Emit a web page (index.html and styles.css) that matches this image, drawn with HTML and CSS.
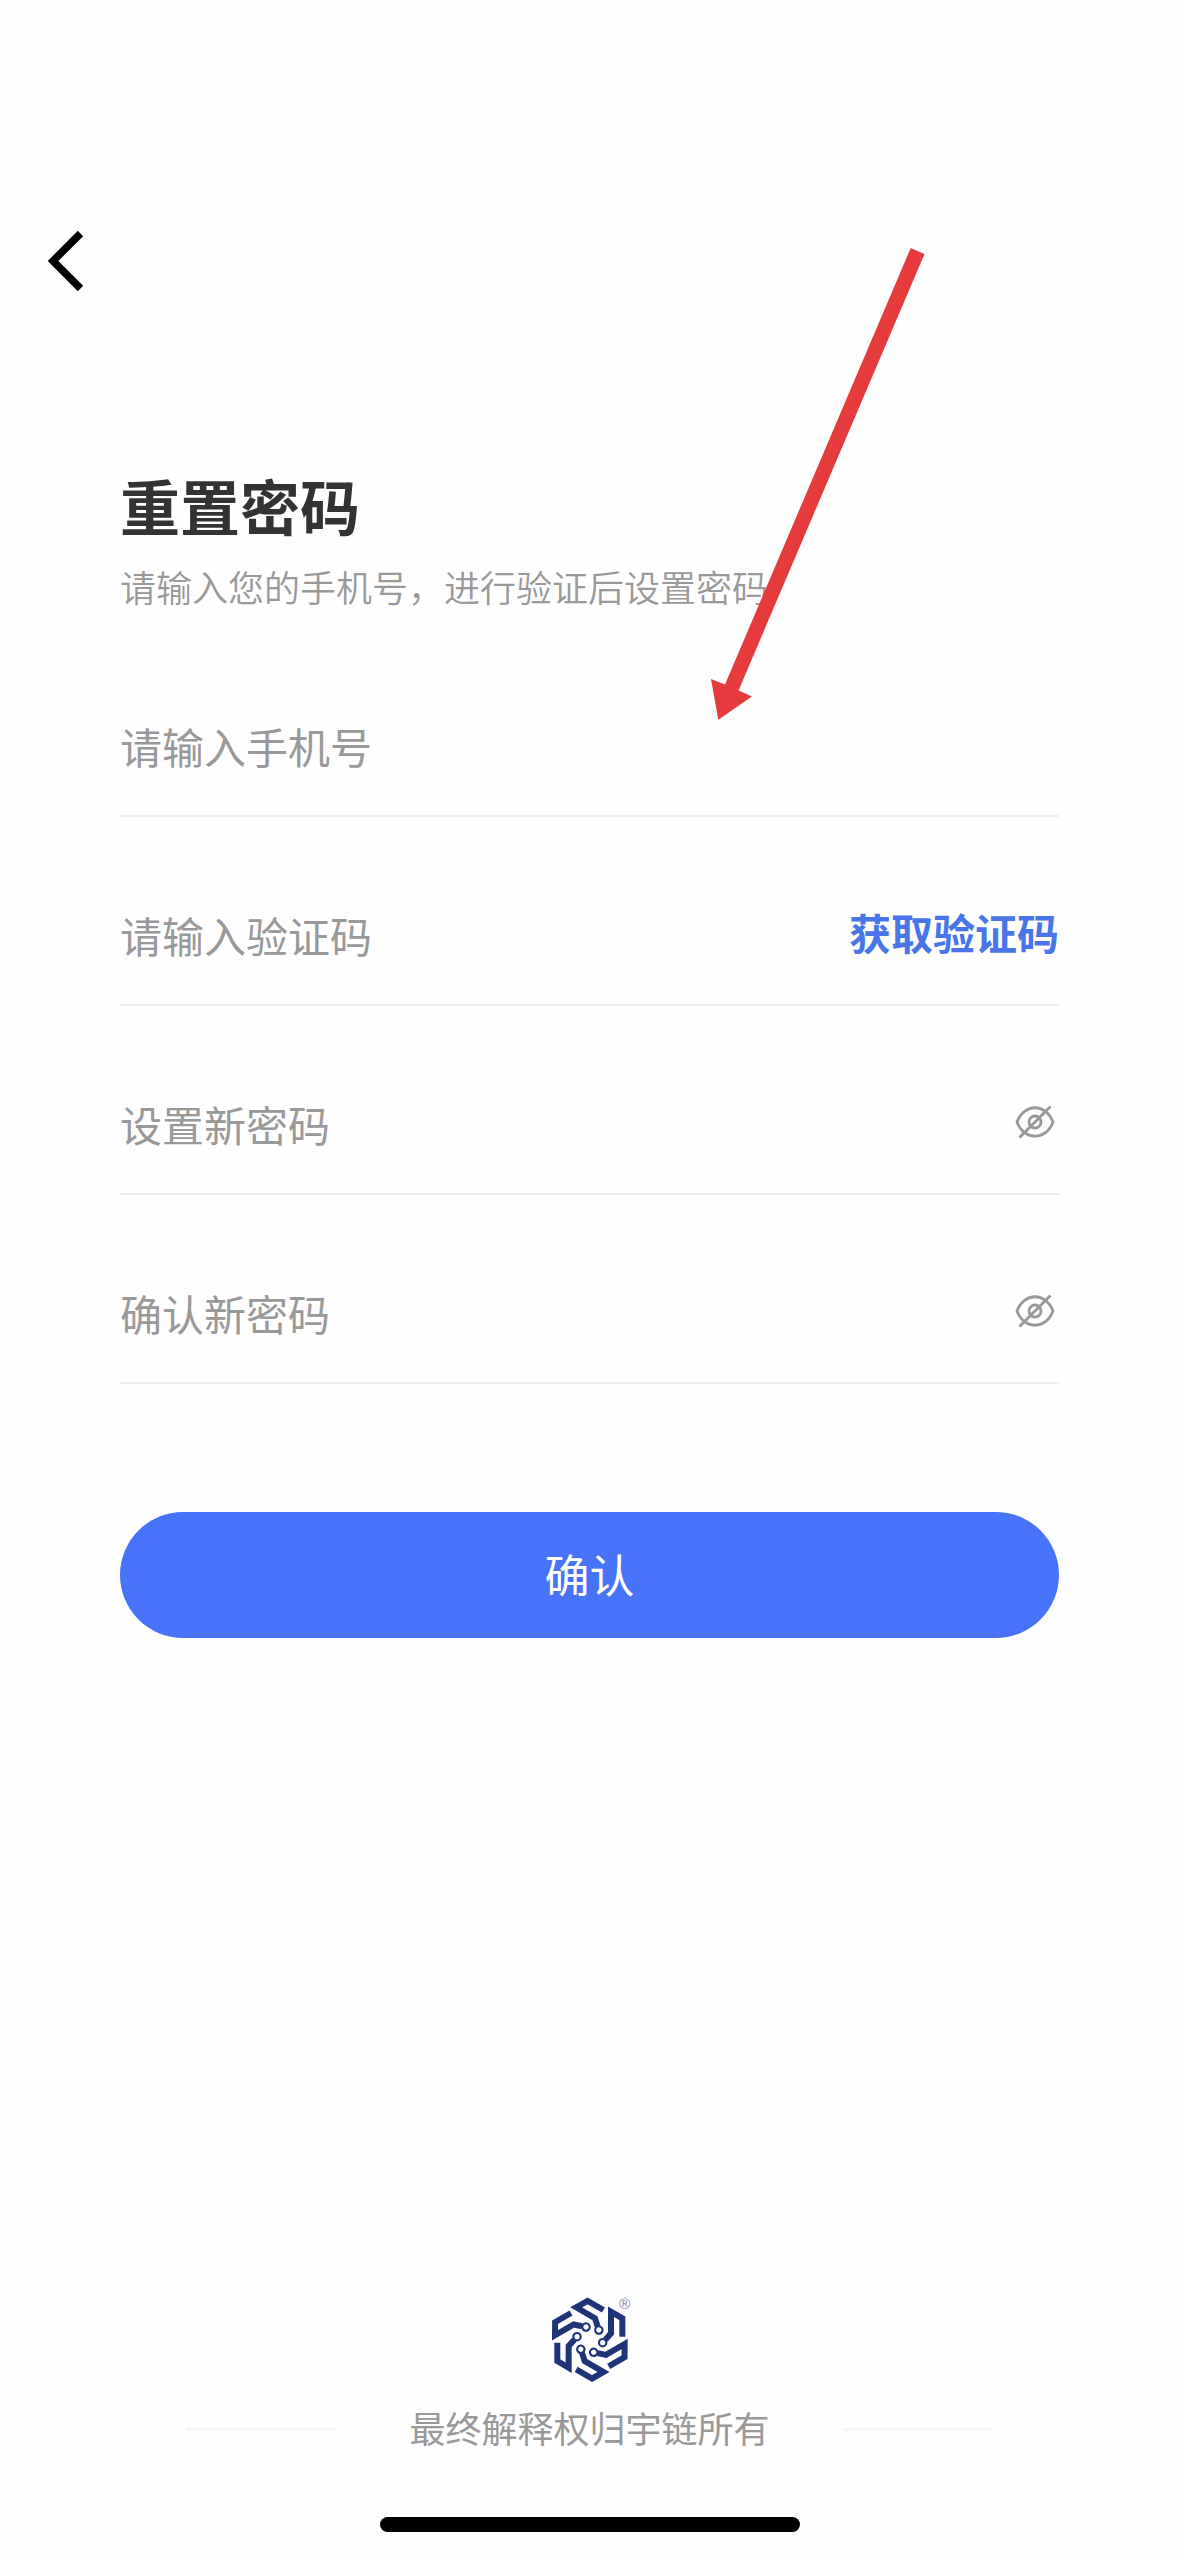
FILE: index.html
```html
<!DOCTYPE html>
<html lang="zh-CN">
<head>
    <meta charset="UTF-8">
    <title>重置密码</title>
    <link rel="stylesheet" href="styles.css">
</head>
<body>
    <div class="page">
        <header class="nav">
            <svg class="back" viewBox="0 0 40 64" fill="none" stroke="#000" stroke-width="7.5">
                <path d="M35.5 4.5 L8 32 L35.5 59.5"/>
            </svg>
        </header>

        <main class="content">
            <h1 class="title">重置密码</h1>
            <p class="subtitle">请输入您的手机号，进行验证后设置密码</p>

            <form class="form">
                <div class="field">
                    <input class="input" type="text" placeholder="请输入手机号">
                </div>
                <div class="field">
                    <input class="input" type="text" placeholder="请输入验证码">
                    <a class="get-code">获取验证码</a>
                </div>
                <div class="field">
                    <input class="input" type="password" placeholder="设置新密码">
                    <svg class="eye" viewBox="0 0 42 36" fill="none" stroke="#999" stroke-width="2.8">
                        <path d="M3 18 C10 -1 32 -1 39 18 C32 37 10 37 3 18 Z"/>
                        <circle cx="21" cy="18" r="6"/>
                        <path d="M5.5 33.5 L36.5 2.5"/>
                    </svg>
                </div>
                <div class="field">
                    <input class="input" type="password" placeholder="确认新密码">
                    <svg class="eye" viewBox="0 0 42 36" fill="none" stroke="#999" stroke-width="2.8">
                        <path d="M3 18 C10 -1 32 -1 39 18 C32 37 10 37 3 18 Z"/>
                        <circle cx="21" cy="18" r="6"/>
                        <path d="M5.5 33.5 L36.5 2.5"/>
                    </svg>
                </div>
                <button class="submit" type="button">确认</button>
            </form>
        </main>

        <footer class="footer">
            <svg class="logo" viewBox="0 0 330 330">
                <defs>
                    <g id="arm" fill="none" stroke="#1f3478">
                        <path d="M262 155 V100 L228 80 V145 L211 164" stroke-width="18"/>
                        <circle cx="203" cy="173" r="11" fill="#fefefe" stroke-width="6.5"/>
                    </g>
                </defs>
                <use href="#arm"/>
                <use href="#arm" transform="rotate(60 164.5 164)"/>
                <use href="#arm" transform="rotate(120 164.5 164)"/>
                <use href="#arm" transform="rotate(180 164.5 164)"/>
                <use href="#arm" transform="rotate(240 164.5 164)"/>
                <use href="#arm" transform="rotate(300 164.5 164)"/>
                <text class="logo-mark" x="252" y="73">®</text>
            </svg>
            <div class="footer-row">
                <span class="footer-line"></span>
                <span class="footer-text">最终解释权归宇链所有</span>
                <span class="footer-line"></span>
            </div>
            <div class="home-bar"></div>
        </footer>

        <!-- Arrow pointing at the phone field -->
        <svg class="pointer" viewBox="0 0 220 480">
            <path d="M210.7 8 L224.5 14 L38.5 450.5 L52 456.5 L18.3 479.7 L11 439 L25 444.5 Z" fill="#e53b3c"/>
        </svg>
    </div>
</body>
</html>
```

FILE: styles.css
```css
* {
    box-sizing: border-box;
}

body {
    margin: 0;
    background: #fefefe;
    font-family: "Noto Sans CJK SC", sans-serif;
}

.page {
    position: relative;
    display: flex;
    flex-direction: column;
    width: 1179px;
    height: 2556px;
    overflow: hidden;
}

.nav {
    height: 459px;
    padding: 229px 0 0 45px;
}

.back {
    display: block;
    width: 40px;
    height: 64px;
}

.content {
    padding: 0 120px;
}

.title {
    margin: 0;
    font-size: 60px;
    line-height: 92px;
    font-weight: 700;
    color: #333;
}

.subtitle {
    margin: 0;
    padding-top: 8px;
    font-size: 36px;
    line-height: 54px;
    font-weight: 350;
    color: #999;
}

.form {
    display: flex;
    flex-direction: column;
    padding-top: 15px;
}

.field {
    display: flex;
    align-items: flex-end;
    justify-content: space-between;
    height: 189px;
    padding-bottom: 36px;
    border-bottom: 2px solid #eee;
}

.input {
    flex: 1;
    min-width: 0;
    height: 62px;
    margin-bottom: 3px;
    padding: 0;
    border: 0;
    outline: 0;
    background: transparent;
    font-family: inherit;
    font-size: 42px;
    color: #333;
}

.input::placeholder {
    color: #999;
    opacity: 1;
}

.get-code {
    margin-bottom: 5px;
    font-size: 42px;
    line-height: 62px;
    font-weight: 700;
    color: #4876e8;
}

.eye {
    width: 42px;
    height: 36px;
    margin: 0 3px 17px 0;
}

.submit {
    height: 126px;
    margin-top: 128px;
    padding: 0 0 3px;
    border: 0;
    border-radius: 63px;
    background: #4773f9;
    font-family: inherit;
    font-size: 45px;
    color: #fff;
}

.footer {
    display: flex;
    flex-direction: column;
    align-items: center;
    margin-top: auto;
    padding-bottom: 24px;
}

.logo {
    width: 110px;
    height: 110px;
}

.logo-mark {
    font-family: "Liberation Sans", sans-serif;
    font-size: 46px;
    fill: #7b86ae;
}

.footer-row {
    display: flex;
    align-items: center;
    justify-content: center;
    gap: 73px;
    margin-top: 5px;
}

.footer-line {
    width: 150px;
    height: 3px;
    margin-top: 4px;
    background: #f5f5f5;
}

.footer-text {
    font-size: 36px;
    line-height: 54px;
    color: #999;
}

.home-bar {
    width: 420px;
    height: 15px;
    margin-top: 63px;
    border-radius: 8px;
    background: #000;
}

.pointer {
    position: absolute;
    top: 240px;
    left: 700px;
    width: 220px;
    height: 480px;
    overflow: visible;
}
```
